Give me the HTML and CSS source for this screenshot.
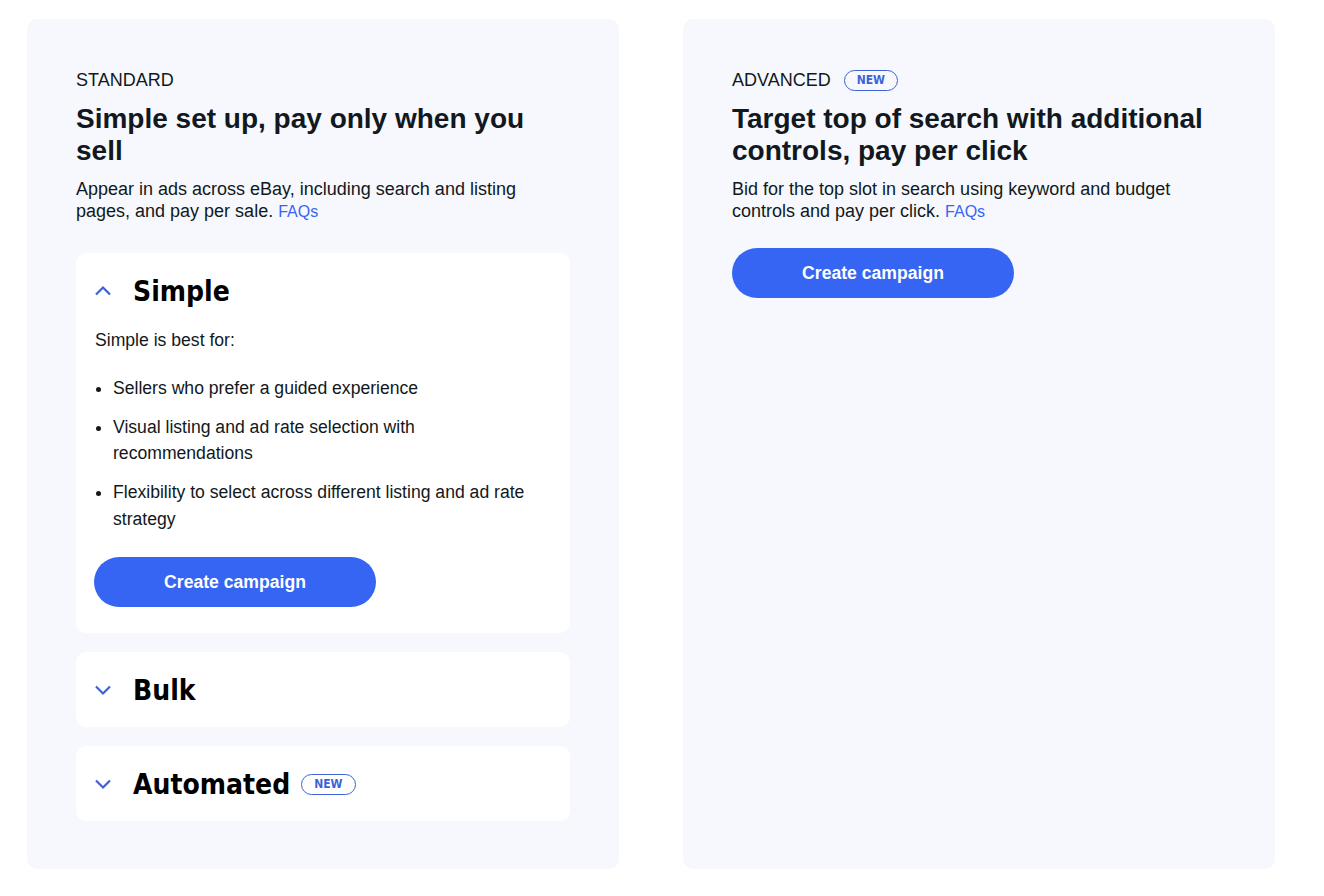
FILE: index.html
```html
<!DOCTYPE html>
<html lang="en">

<head>
    <meta charset="UTF-8">
    <meta name="viewport" content="width=device-width, initial-scale=1.0">
    <title>Create campaign</title>
    <link rel="stylesheet" href="styles.css">
</head>

<body>
    <div class="page">
        <div class="card">
            <div class="eyebrow">STANDARD</div>
            <h2 class="card-title">Simple set up, pay only when you sell</h2>
            <p class="card-text">Appear in ads across eBay, including search and listing pages, and pay per sale. <a href="#">FAQs</a></p>

            <div class="panel">
                <div class="panel-head">
                    <svg class="chevron" viewBox="0 0 18 18" width="18" height="18"><path d="M2 12.5 L9 5.5 L16 12.5" /></svg>
                    <h3>Simple</h3>
                </div>
                <p class="panel-text">Simple is best for:</p>
                <ul class="panel-list">
                    <li>Sellers who prefer a guided experience</li>
                    <li>Visual listing and ad rate selection with recommendations</li>
                    <li>Flexibility to select across different listing and ad rate strategy</li>
                </ul>
                <button type="button" class="btn">Create campaign</button>
            </div>

            <div class="panel">
                <div class="panel-head">
                    <svg class="chevron" viewBox="0 0 18 18" width="18" height="18"><path d="M2 5.5 L9 12.5 L16 5.5" /></svg>
                    <h3>Bulk</h3>
                </div>
            </div>

            <div class="panel">
                <div class="panel-head">
                    <svg class="chevron" viewBox="0 0 18 18" width="18" height="18"><path d="M2 5.5 L9 12.5 L16 5.5" /></svg>
                    <h3>Automated</h3>
                    <span class="badge">NEW</span>
                </div>
            </div>
        </div>

        <div class="card">
            <div class="eyebrow">ADVANCED <span class="badge">NEW</span></div>
            <h2 class="card-title">Target top of search with additional controls, pay per click</h2>
            <p class="card-text">Bid for the top slot in search using keyword and budget controls and pay per click. <a href="#">FAQs</a></p>
            <button type="button" class="btn btn-right">Create campaign</button>
        </div>
    </div>
</body>
</html>
```

FILE: styles.css
```css
* {
    box-sizing: border-box;
}

body {
    margin: 0;
    background-color: #ffffff;
    color: #111820;
    font-family: "Liberation Sans", Arial, sans-serif;
    font-size: 17.6px;
}

.page {
    display: grid;
    grid-template-columns: 1fr 1fr;
    gap: 64px;
    width: 1248px;
    margin: 19px 0 0 27px;
}

.card {
    background-color: #f6f8fd;
    border-radius: 10px;
    min-height: 850px;
    padding: 48px 49px;
}

.eyebrow {
    display: flex;
    align-items: center;
    gap: 13px;
    font-size: 18px;
    line-height: 24px;
    padding-top: 1px;
}

.card-title {
    margin: 11px 0 0;
    font-size: 28px;
    line-height: 32px;
    font-weight: bold;
}

.card-text {
    margin: 11px 0 0;
    font-size: 18px;
    line-height: 22px;
}

/* link is a bit smaller than the text around it */
.card-text a {
    color: #3665f3;
    font-size: 16px;
    line-height: 18px;
    text-decoration: none;
}

.panel {
    background-color: #ffffff;
    border-radius: 10px;
    padding: 18px 18px 17px;
    margin-top: 19px;
}

.card-text + .panel {
    margin-top: 31px;
}

.panel-head {
    display: flex;
    align-items: center;
    height: 40px;
}

.chevron {
    fill: none;
    stroke: #3d62d8;
    stroke-width: 2.2;
    margin-right: 21px;
}

.panel-head h3 {
    margin: 0;
    font-family: "DejaVu Sans Condensed", "DejaVu Sans", sans-serif;
    font-size: 28px;
    font-weight: bold;
    color: #000000;
}

.panel-head .badge {
    margin-left: 11px;
}

.badge {
    display: inline-flex;
    align-items: center;
    justify-content: center;
    height: 21px;
    padding: 0 12px;
    border: 1px solid #3d62d8;
    border-radius: 11px;
    color: #3d62d8;
    font-family: "DejaVu Sans Condensed", "DejaVu Sans", sans-serif;
    font-size: 12px;
    font-weight: bold;
}

.panel-text {
    margin: 17px 0 0 1px;
    line-height: 24px;
}

.panel-list {
    margin: 23px 0 0;
    padding-left: 19px;
}

.panel-list li {
    line-height: 26.4px;
    margin-bottom: 12.6px;
}

.panel-list li:last-child {
    margin-bottom: 0;
}

.btn {
    display: block;
    width: 282px;
    height: 50px;
    margin: 25px 0 9px;
    border: none;
    border-radius: 25px;
    background-color: #3665f3;
    color: #ffffff;
    font-family: "Liberation Sans", Arial, sans-serif;
    font-size: 17.6px;
    font-weight: bold;
    cursor: pointer;
}

.btn-right {
    margin: 26px 0 0;
}
```
